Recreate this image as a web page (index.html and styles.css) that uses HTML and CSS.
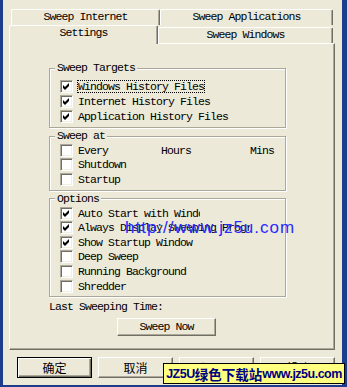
FILE: index.html
```html
<!DOCTYPE html>
<html lang="zh-CN">
<head>
    <meta charset="UTF-8">
    <meta name="viewport" content="width=device-width, initial-scale=1.0">
    <title>Settings</title>
    <link rel="stylesheet" href="styles.css">
</head>
<body>
    <div class="window">
        <div class="tabs">
            <div class="tab-row back">
                <div class="tab t-internet">Sweep Internet</div>
                <div class="tab t-apps">Sweep Applications</div>
            </div>
            <div class="tab-row front">
                <div class="tab t-settings">Settings</div>
                <div class="tab t-windows">Sweep Windows</div>
            </div>
        </div>

        <div class="panel">
            <fieldset class="group targets">
                <legend>Sweep Targets</legend>
                <div class="row">
                    <span class="cb"><svg viewBox="0 0 11 11" width="11" height="11"><path d="M2 4 L4 6 L8 2 L8 5 L4 9 L2 7 Z"/></svg></span>
                    <span class="lbl focus">Windows History Files</span>
                </div>
                <div class="row">
                    <span class="cb"><svg viewBox="0 0 11 11" width="11" height="11"><path d="M2 4 L4 6 L8 2 L8 5 L4 9 L2 7 Z"/></svg></span>
                    <span class="lbl">Internet History Files</span>
                </div>
                <div class="row">
                    <span class="cb"><svg viewBox="0 0 11 11" width="11" height="11"><path d="M2 4 L4 6 L8 2 L8 5 L4 9 L2 7 Z"/></svg></span>
                    <span class="lbl">Application History Files</span>
                </div>
            </fieldset>

            <fieldset class="group sweep-at">
                <legend>Sweep at</legend>
                <div class="row">
                    <span class="cb"></span>
                    <span class="lbl w-every">Every</span>
                    <span class="lbl w-hours">Hours</span>
                    <span class="lbl">Mins</span>
                </div>
                <div class="row">
                    <span class="cb"></span>
                    <span class="lbl">Shutdown</span>
                </div>
                <div class="row">
                    <span class="cb"></span>
                    <span class="lbl">Startup</span>
                </div>
            </fieldset>

            <fieldset class="group options">
                <legend>Options</legend>
                <div class="row">
                    <span class="cb"><svg viewBox="0 0 11 11" width="11" height="11"><path d="M2 4 L4 6 L8 2 L8 5 L4 9 L2 7 Z"/></svg></span>
                    <span class="lbl clip-a">Auto Start with Windows</span>
                </div>
                <div class="row">
                    <span class="cb"><svg viewBox="0 0 11 11" width="11" height="11"><path d="M2 4 L4 6 L8 2 L8 5 L4 9 L2 7 Z"/></svg></span>
                    <span class="lbl clip-b">Always Display Sweeping Progress</span>
                </div>
                <div class="row">
                    <span class="cb"><svg viewBox="0 0 11 11" width="11" height="11"><path d="M2 4 L4 6 L8 2 L8 5 L4 9 L2 7 Z"/></svg></span>
                    <span class="lbl">Show Startup Window</span>
                </div>
                <div class="row">
                    <span class="cb"></span>
                    <span class="lbl">Deep Sweep</span>
                </div>
                <div class="row">
                    <span class="cb"></span>
                    <span class="lbl">Running Background</span>
                </div>
                <div class="row">
                    <span class="cb"></span>
                    <span class="lbl">Shredder</span>
                </div>
            </fieldset>

            <div class="last-time">Last Sweeping Time:</div>
            <button type="button" class="btn sweep-now">Sweep Now</button>
        </div>

        <div class="dialog-buttons">
            <button type="button" class="btn dlg default">确定</button>
            <button type="button" class="btn dlg">取消</button>
            <button type="button" class="btn dlg" disabled>应用(A)</button>
            <button type="button" class="btn dlg">帮助</button>
        </div>

        <div class="watermark">http://www.jz5u.com</div>
        <div class="banner"><span class="b-latin">JZ5U</span><span class="b-cjk">绿色下载站</span><span class="b-latin">www.jz5u.com</span></div>
    </div>
</body>
</html>
```

FILE: styles.css
```css
body {
    margin: 0;
    background-color: #ece9d8;
    font-family: "Liberation Mono", "Noto Sans CJK SC", monospace;
    font-size: 11.5px;
    letter-spacing: -0.9px;
    color: #000;
}
.window {
    position: relative;
    width: 347px;
    height: 387px;
    box-sizing: border-box;
    border-left: 3px solid #1c3d8c;
    border-right: 5px solid #1c3d8c;
    border-bottom: 2px solid #1c3d8c;
    padding: 9px 7px 0 6px;
}

/* tabs */
.tabs {
    height: 34px;
}
.tab-row {
    display: flex;
}
.back {
    height: 16px;
    padding-left: 2px;
}
.front {
    height: 18px;
}
.tab {
    box-sizing: border-box;
    background-color: #ece9d8;
    border-top: 1px solid #fff;
    border-left: 1px solid #fff;
    border-right: 1px solid #716f64;
    box-shadow: inset -1px 0 #aca899;
    border-radius: 2px 2px 0 0;
    text-align: center;
    white-space: nowrap;
}
.back .tab {
    height: 16px;
    line-height: 14px;
}
.t-internet {
    width: 149px;
}
.t-apps {
    width: 173px;
}
.t-settings {
    position: relative;
    z-index: 1;
    width: 149px;
    height: 19px;
    padding-top: 1px;
    line-height: 12px;
}
.t-windows {
    width: 175px;
    height: 16px;
    margin-top: 2px;
    line-height: 14px;
}

/* page */
.panel {
    height: 307px;
    box-sizing: border-box;
    border: 1px solid;
    border-color: #fff #716f64 #716f64 #fff;
    box-shadow: inset -1px -1px #aca899;
    padding: 18px 0 0 39px;
}
.group {
    width: 237px;
    box-sizing: border-box;
    min-width: 0;
    margin: 0;
    padding: 5px 0 3px 10px;
    border: 1px solid #aca899;
    box-shadow: inset 1px 1px #fff, 1px 1px #fff;
}
.group legend {
    margin-left: -5px;
    padding: 0 2px;
    line-height: 12px;
    background-color: #ece9d8;
}
.sweep-at {
    margin-top: 2px;
    padding-top: 1px;
}
.options {
    margin-top: 2px;
    padding-top: 1px;
}
.row {
    display: flex;
    align-items: center;
    height: 15px;
}
.sweep-at .row, .options .row {
    height: 14.6px;
}
.cb {
    flex: none;
    width: 13px;
    height: 13px;
    box-sizing: border-box;
    margin-right: 4px;
    background-color: #fff;
    border: 1px solid;
    border-color: #aca899 #fff #fff #aca899;
    box-shadow: inset 1px 1px #716f64, inset -1px -1px #f1efe2;
}
.cb svg {
    display: block;
    fill: #000;
}
.lbl {
    border: 1px solid transparent;
    line-height: 11px;
    white-space: nowrap;
}
.lbl.focus {
    border: 1px dotted #000;
}
.w-every {
    width: 81px;
}
.w-hours {
    width: 87px;
}
.clip-a, .clip-b {
    overflow: hidden;
}
.clip-a {
    width: 122px;
}
.clip-b {
    width: 172px;
}
.last-time {
    margin-top: 4px;
    line-height: 12px;
}

/* buttons */
.btn {
    display: block;
    box-sizing: border-box;
    padding: 0;
    background-color: #ece9d8;
    border: 1px solid;
    border-color: #fff #716f64 #716f64 #fff;
    box-shadow: inset -1px -1px #aca899;
    color: #000;
    font: inherit;
    letter-spacing: inherit;
}
.sweep-now {
    width: 99px;
    height: 18px;
    margin: 5px 0 0 68px;
    line-height: 14px;
}
.dialog-buttons {
    display: flex;
    justify-content: flex-end;
    gap: 6px;
    margin-top: 7px;
}
.dlg {
    width: 75px;
    height: 21px;
    font-family: "Noto Sans CJK SC", sans-serif;
    font-size: 12px;
    letter-spacing: 0;
}
.dlg.default {
    border: 1px solid #000;
    box-shadow: inset 1px 1px #fff, inset -1px -1px #716f64, inset -2px -2px #aca899;
}
.dlg:disabled {
    color: #aca899;
    text-shadow: 1px 1px #fff;
}

/* overlays */
.watermark {
    position: absolute;
    left: 122px;
    top: 219px;
    font-family: "Liberation Sans", sans-serif;
    font-size: 17px;
    line-height: 17px;
    letter-spacing: 1px;
    color: #2a2aff;
    white-space: nowrap;
}
.banner {
    position: absolute;
    left: 160px;
    top: 363px;
    width: 182px;
    height: 21px;
    box-sizing: border-box;
    display: flex;
    align-items: center;
    justify-content: center;
    background-color: #ffff80;
    border: 1px solid #000;
    color: #000080;
    font-weight: bold;
    white-space: nowrap;
    letter-spacing: 0;
}
.b-latin {
    font-family: "Liberation Sans", sans-serif;
    font-size: 12.5px;
    letter-spacing: -0.5px;
}
.b-cjk {
    font-family: "Noto Sans CJK SC", sans-serif;
    font-size: 13.5px;
}
```
